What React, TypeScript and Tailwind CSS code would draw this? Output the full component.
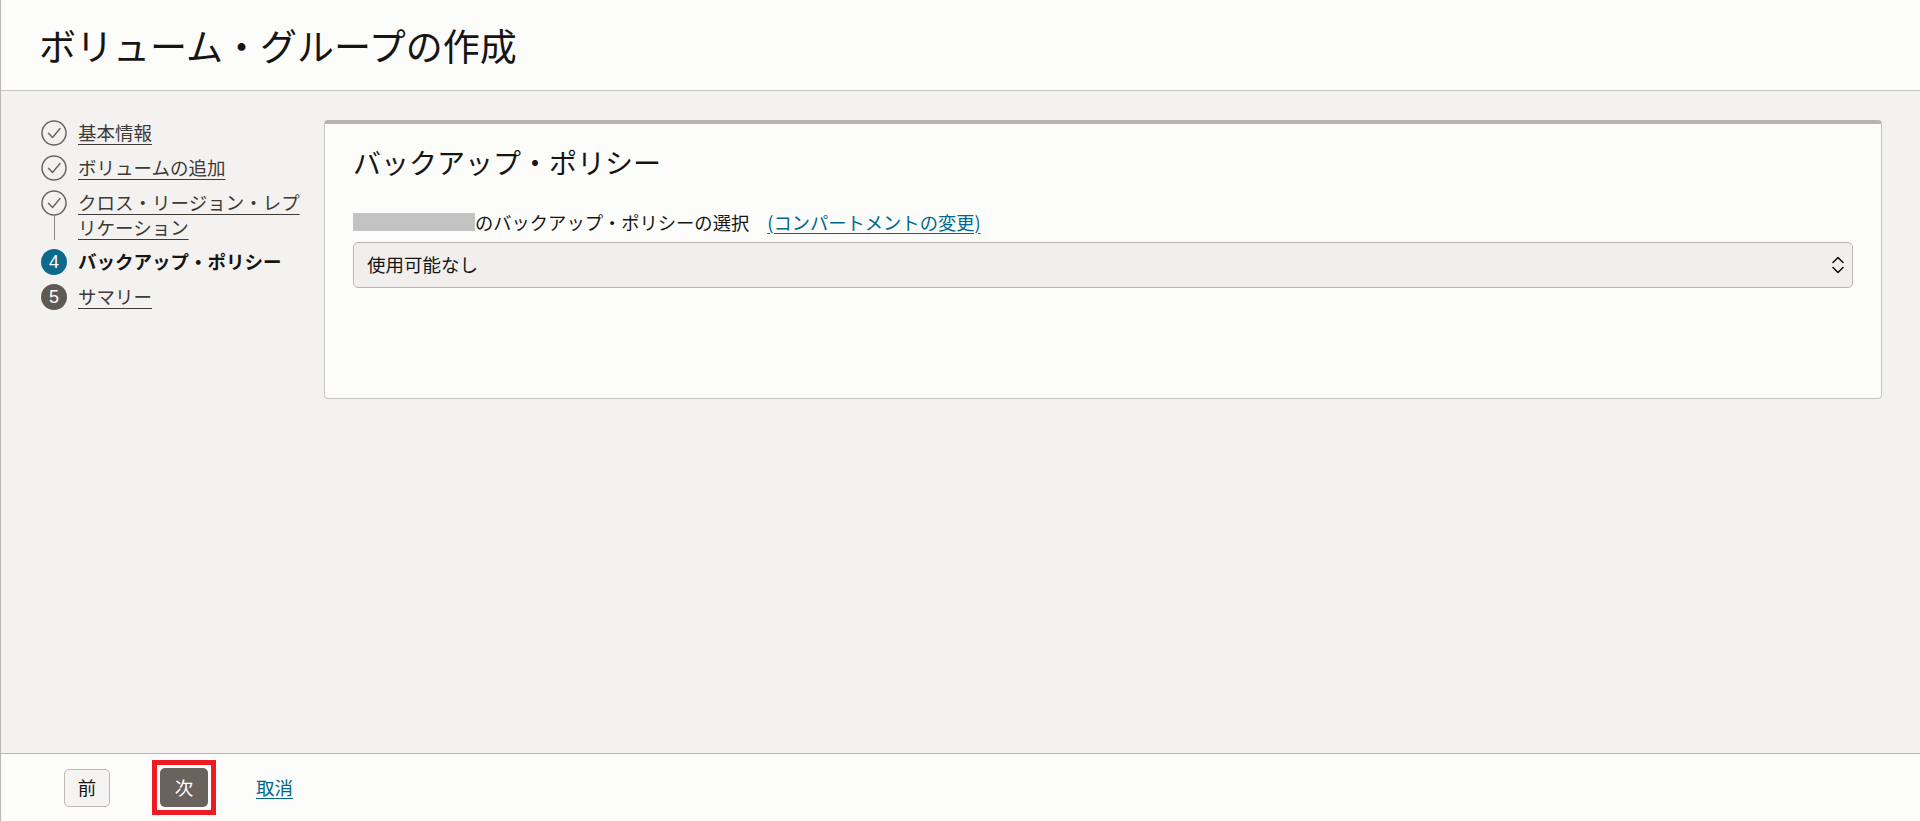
import React from "react";

type Step = { label: string; state: "done" | "current" | "todo"; num: number };

const steps: Step[] = [
	{ label: "基本情報", state: "done", num: 1 },
	{ label: "ボリュームの追加", state: "done", num: 2 },
	{ label: "クロス・リージョン・レプリケーション", state: "done", num: 3 },
	{ label: "バックアップ・ポリシー", state: "current", num: 4 },
	{ label: "サマリー", state: "todo", num: 5 },
];

function StepIcon({ step }: { step: Step }) {
	if (step.state === "done") {
		return (
			<svg width="26" height="26" viewBox="0 0 26 26" className="shrink-0">
				<circle cx="13" cy="13" r="12" fill="none" stroke="#6a655f" strokeWidth="1.5" />
				<path d="M7.5 13.2 L11.5 17.5 L19 8.5" fill="none" stroke="#6a655f" strokeWidth="1.5" strokeLinecap="round" strokeLinejoin="round" />
			</svg>
		);
	}
	return (
		<div
			className={
				"flex h-[26px] w-[26px] shrink-0 items-center justify-center rounded-full font-['Liberation_Sans',sans-serif] text-[18px] text-white " +
				(step.state === "current" ? "bg-[#0d6a8d]" : "bg-[#5f5954]")
			}
		>
			{step.num}
		</div>
	);
}

export default function App() {
	return (
		<div className="flex h-[821px] flex-col border-l border-[#bdb7b1] bg-[#f3f2f1] font-['Noto_Sans_CJK_JP',sans-serif] text-[#161513]">
			<header className="flex h-[91px] shrink-0 items-center border-b border-[#c9c5c1] bg-[#fcfcfb] pl-[38px]">
				<h1 className="text-[37px] leading-none">ボリューム・グループの作成</h1>
			</header>

			<main className="flex flex-1 pl-[40px] pr-[38px] pt-[29px]">
				<nav className="w-[283px] shrink-0">
					{steps.map((step, i) => (
						<div key={step.label} className={"flex gap-[11px] " + (i < steps.length - 1 ? "pb-[9px]" : "")}>
							<div className="flex w-[26px] flex-col items-center">
								<StepIcon step={step} />
								{i < steps.length - 1 && <div className="w-px flex-1 bg-[#8d8883]" />}
							</div>
							<div className="w-[228px] text-[18.5px] leading-[25px]">
								{step.state === "current" ? (
									<span className="font-bold text-[#161513]">{step.label}</span>
								) : (
									<a className="text-[#3d3a37] underline underline-offset-[4px]">{step.label}</a>
								)}
							</div>
						</div>
					))}
				</nav>

				<section className="h-[279px] flex-1 rounded-[4px] border border-t-4 border-[#c8c4bf] border-t-[#bab4ae] bg-[#fcfcfb] px-[28px] pt-[20px]">
					<h2 className="text-[28px] leading-[36px]">バックアップ・ポリシー</h2>
					<div className="mt-[29px] flex items-center text-[18.3px] leading-[26px]">
						<span className="inline-block h-[18px] w-[122px] bg-[#c3c3c3]" />
						<span>のバックアップ・ポリシーの選択</span>
						<a className="ml-[18px] text-[#00688c] underline underline-offset-[3px]">(コンパートメントの変更)</a>
					</div>
					<div className="mt-[7px] flex h-[46px] items-center justify-between rounded-[5px] border border-[#bbb5b0] bg-[#f1efed] pl-[13px] pr-[7px]">
						<span className="text-[18.5px]">使用可能なし</span>
						<svg width="14" height="22" viewBox="0 0 14 22">
							<path d="M2 8.5 L7 3.5 L12 8.5" fill="none" stroke="#161513" strokeWidth="1.6" strokeLinecap="round" strokeLinejoin="round" />
							<path d="M2 13.5 L7 18.5 L12 13.5" fill="none" stroke="#161513" strokeWidth="1.6" strokeLinecap="round" strokeLinejoin="round" />
						</svg>
					</div>
				</section>
			</main>

			<footer className="flex h-[68px] shrink-0 items-center border-t border-[#bcb6b1] bg-[#fcfcfb] pl-[63px]">
				<button className="h-[38px] w-[46px] rounded-[5px] border border-[#bdb8b3] bg-[#f5f4f2] text-[18.5px] text-[#161513]">
					前
				</button>
				<div className="ml-[42px] border-[5px] border-[#ec1c24] p-[3px]">
					<button className="block h-[39px] w-[48px] rounded-[5px] bg-[#6a625c] text-[18.5px] text-white">次</button>
				</div>
				<a className="ml-[40px] text-[18.5px] text-[#00688c] underline underline-offset-[3px]">取消</a>
			</footer>
		</div>
	);
}
